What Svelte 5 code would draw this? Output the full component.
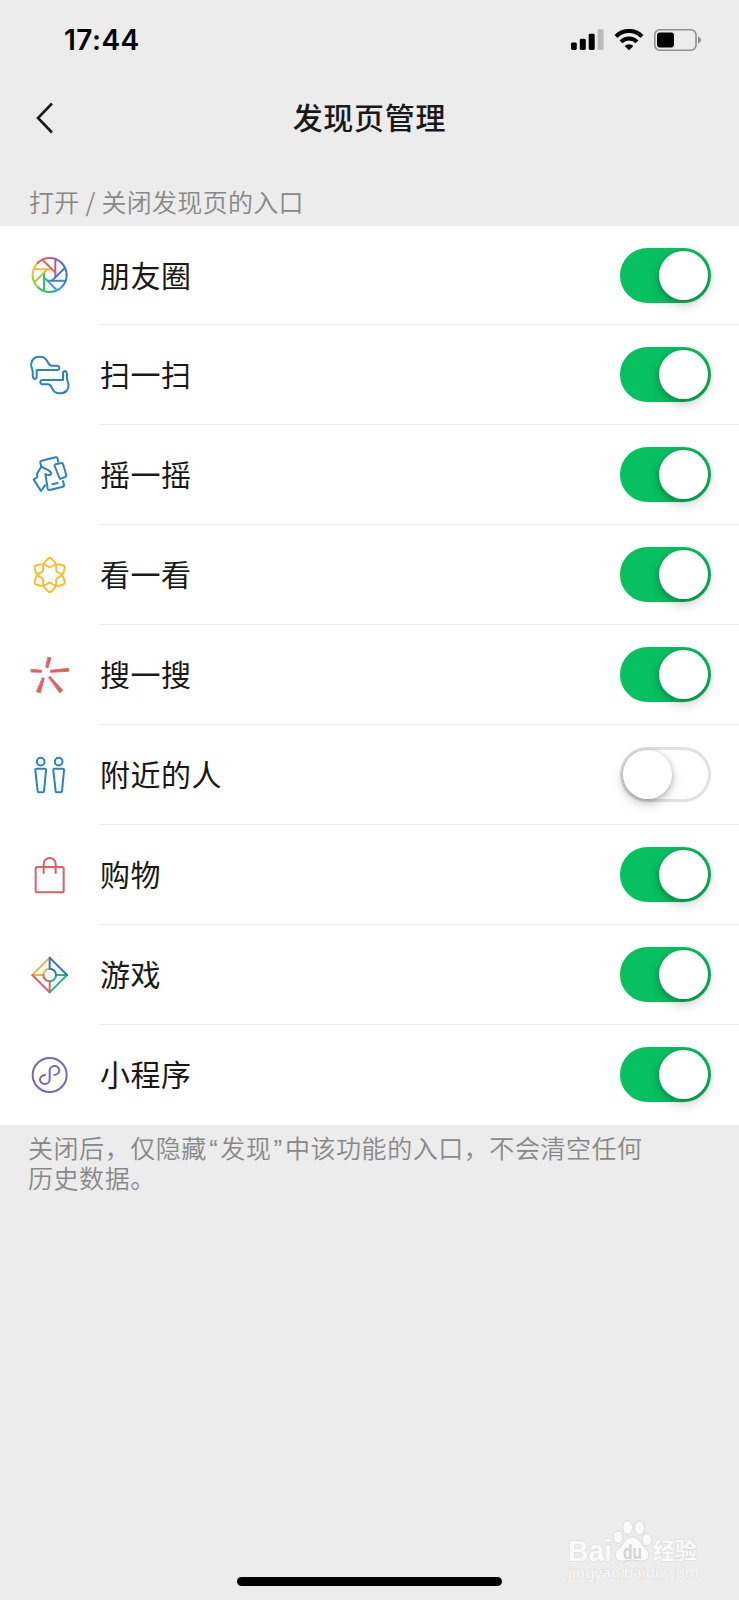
<script>
  // Entries of the Discover page
  let entries = $state([
    { id: 'moments', label: '朋友圈', on: true },
    { id: 'scan', label: '扫一扫', on: true },
    { id: 'shake', label: '摇一摇', on: true },
    { id: 'look', label: '看一看', on: true },
    { id: 'search', label: '搜一搜', on: true },
    { id: 'nearby', label: '附近的人', on: false },
    { id: 'shopping', label: '购物', on: true },
    { id: 'games', label: '游戏', on: true },
    { id: 'mini', label: '小程序', on: true }
  ]);

  // Shutter blades, clockwise from the top
  const blades = ['#9a62b5', '#4a72c4', '#2f86cf', '#35a9bd', '#35bd68', '#a4ce3c', '#f5bd35', '#ea5b5c'];

  function toggle(entry) {
    entry.on = !entry.on;
  }
</script>

<div class="screen">
  <div class="status-bar">
    <span class="time">17:44</span>
    <div class="status-icons">
      <svg width="33" height="22" viewBox="0 0 33 22">
        <rect x="0" y="13.5" width="5.8" height="7.5" rx="1.4" />
        <rect x="8.8" y="9.7" width="6" height="11.3" rx="1.4" />
        <rect x="17.7" y="4.8" width="6" height="16.2" rx="1.4" />
        <rect x="26.6" y="0.2" width="6" height="20.8" rx="1.4" fill="#bcbcbc" />
      </svg>
      <svg class="wifi" width="30" height="22" viewBox="0 0 30 22">
        <path d="M2 7.4A18.4 18.4 0 0 1 28 7.4" fill="none" stroke="#000" stroke-width="4.2" />
        <path d="M7 12.8A11.3 11.3 0 0 1 23 12.8" fill="none" stroke="#000" stroke-width="4" />
        <path d="M15 21.2L10.6 17A6.3 6.3 0 0 1 19.4 17Z" />
      </svg>
      <svg class="battery" width="48" height="22" viewBox="0 0 48 22">
        <rect x="0.8" y="0.8" width="41.2" height="20.4" rx="5" fill="none" stroke="#8e8e8e" stroke-width="1.6" />
        <rect x="3" y="3.4" width="17" height="15" rx="2.8" />
        <path d="M44 7.2Q47 8.6 47 11T44 14.8Z" fill="#8e8e8e" />
      </svg>
    </div>
  </div>

  <div class="nav">
    <button class="back" aria-label="返回">
      <svg width="18" height="32" viewBox="0 0 18 32">
        <path d="M16 1.5L2 16L16 30.5" fill="none" stroke="#191919" stroke-width="2.6" />
      </svg>
    </button>
    <h1>发现页管理</h1>
  </div>

  <p class="caption">打开 / 关闭发现页的入口</p>

  <div class="list">
    {#each entries as entry (entry.id)}
      <div class="row">
        <svg class="icon" viewBox="0 0 120 120">
          {#if entry.id === 'moments'}
            {#each blades as color, i}
              <path transform="rotate({i * 45} 59 60)" stroke={color} d="M76 12V67M59 9A51 51 0 0 1 95 24" />
            {/each}
          {:else if entry.id === 'scan'}
            {#each [0, 180] as angle}
              <path
                transform="rotate({angle} 59.5 60)"
                stroke="#2b83c2"
                d="M4 34C1 18 12 5 27 5C44 4 49 13 55 24Q58 31 64 32H81Q88 33 88 39Q88 45 81 45H20V64Q20 72 14 72Q9 71 8 61Q10 49 4 34Z"
              />
            {/each}
          {:else if entry.id === 'shake'}
            <g stroke="#2b83c2">
              <path d="M34 35L31 23Q30 18 35 17L77 7Q82 6 83 11L84 20" />
              <path d="M77 28L94 24Q98 23 99 27L109 61Q110 65 106 66L93 71Q89 72 88 68L74 33Q73 29 77 28Z" />
              <path d="M45 91L33 108L11 74L22 66L21 56L34 35L57 47Q66 53 62 59Q56 63 46 57L53 101Q54 106 59 105L99 95Q103 94 102 90L99 78" />
              <path d="M67 88L83 84" />
            </g>
          {:else if entry.id === 'look'}
            {#each [0, 60, 120, 180, 240, 300] as angle}
              <path transform="rotate({angle} 59 60)" stroke="#efc12f" d="M41 29Q42 22 47 18L55 10Q59 7 63 10L71 18Q76 22 77 29Q69 30 65 34Q59 39 53 34Q49 30 41 29Z" />
            {/each}
          {:else if entry.id === 'search'}
            <g fill="#dc5f64" stroke="#dc5f64" class="rays">
              <path d="M54 7L63 9L54 38L48 37Z" />
              <path d="M62 46L116 40V49L62 52Z" />
              <path d="M4 43L35 46V52L4 51Z" />
              <path d="M38 68L43 70L31 113L20 110Z" />
              <path d="M56 67L60 64L98 106L90 113Z" />
            </g>
          {:else if entry.id === 'nearby'}
            {#each [0, 54] as x}
              <g transform="translate({x} 0)" stroke="#2b83c2">
                <circle cx="32" cy="20" r="11.5" />
                <path d="M20 41H44Q49 41 48 46L42 109Q42 112 38 112H27Q23 112 23 109L16 46Q15 41 20 41Z" />
              </g>
            {/each}
          {:else if entry.id === 'shopping'}
            <g stroke="#dc5f64">
              <rect x="17" y="36" width="84" height="76" rx="5" />
              <path d="M41 54V27A18 18 0 0 1 77 27V54" />
            </g>
          {:else if entry.id === 'games'}
            <path stroke="#efb44b" d="M59 8L7 60H40A19 19 0 0 1 59 41" />
            <path stroke="#dc5f64" d="M7 60L59 112V79A19 19 0 0 1 40 60" />
            <path stroke="#26b877" d="M59 112L111 60H78A19 19 0 0 1 59 79" />
            <path stroke="#2b78bd" d="M111 60L59 8V41A19 19 0 0 1 78 60" />
          {:else}
            <g stroke="#7568bd">
              <circle cx="59" cy="60" r="51" />
              <path d="M73 60C82 59 89 53 88 45C86 37 79 33 73 33C65 33 59 39 59 47V73C59 81 53 87 45 87C38 87 31 82 30 75C29 67 36 61 45 60" />
            </g>
          {/if}
        </svg>
        <div class="content">
          <span class="label">{entry.label}</span>
          <button
            class="switch"
            class:on={entry.on}
            role="switch"
            aria-checked={entry.on}
            aria-label={entry.label}
            onclick={() => toggle(entry)}
          >
            <span class="knob"></span>
          </button>
        </div>
      </div>
    {/each}
  </div>

  <p class="note">
    <span class="line">关闭后，仅隐藏<span class="quote">“</span>发现<span class="quote">”</span>中该功能的入口，不会清空任何</span>
    <span class="line">历史数据。</span>
  </p>

  <svg class="watermark" width="140" height="70" viewBox="0 0 140 70">
    <g fill="#fafafa" stroke="#d9d9d9" stroke-width="1">
      <text x="4" y="46" class="brand" textLength="44" lengthAdjust="spacingAndGlyphs">Bai</text>
      <ellipse cx="54" cy="22" rx="4.8" ry="6.2" />
      <ellipse cx="63.5" cy="12.5" rx="5" ry="7" />
      <ellipse cx="75.5" cy="13" rx="5" ry="7" />
      <ellipse cx="83" cy="24.5" rx="4.8" ry="6.2" />
      <path d="M68 22C75 22 77 29 82 34C88 40 84 47 76 46Q68 44 61 46C52 48 48 40 54 34C60 29 61 22 68 22Z" />
      <text x="59" y="43.5" class="du" textLength="19" lengthAdjust="spacingAndGlyphs">du</text>
      <text x="89" y="44" class="cjk" textLength="44" lengthAdjust="spacingAndGlyphs">经验</text>
      <text x="4" y="63" class="url" textLength="131" lengthAdjust="spacingAndGlyphs">jingyan.baidu.com</text>
    </g>
  </svg>

  <div class="home-indicator"></div>
</div>

<style>
  :global(body) {
    margin: 0;
    background: #ececec;
  }

  .screen {
    position: relative;
    display: flex;
    flex-direction: column;
    box-sizing: border-box;
    width: 739px;
    height: 1600px;
    overflow: hidden;
    background: #ececec;
    color: #191919;
    font-family: 'Noto Sans CJK SC', sans-serif;
  }

  .status-bar {
    display: flex;
    justify-content: space-between;
    align-items: center;
    box-sizing: border-box;
    height: 80px;
    padding: 0 37px 0 64px;
  }

  .time {
    color: #000;
    font: 600 28px/34px Inter, sans-serif;
    letter-spacing: 0.5px;
  }

  .status-icons {
    display: flex;
    align-items: center;
  }

  .wifi {
    margin-left: 10px;
  }

  .battery {
    margin-left: 10px;
  }

  .nav {
    display: flex;
    align-items: center;
    justify-content: center;
    position: relative;
    height: 72px;
    padding-bottom: 4px;
  }

  .back {
    position: absolute;
    left: 36px;
    top: 22px;
    padding: 0;
    border: 0;
    background: none;
    line-height: 0;
  }

  h1 {
    margin: 0;
    font-size: 30px;
    font-weight: 500;
    line-height: 44px;
    letter-spacing: 0.75px;
  }

  .caption {
    box-sizing: border-box;
    height: 70px;
    margin: 0;
    padding: 27px 29px 0;
    color: #888;
    font-size: 25px;
    font-weight: 350;
    line-height: 36px;
    letter-spacing: 0.3px;
  }

  .list {
    height: 899px;
    flex: none;
    display: flex;
    flex-direction: column;
    justify-content: flex-end;
    background: #fff;
  }

  .row {
    display: flex;
    height: 100px;
    flex: none;
    padding-left: 30px;
  }

  .row:first-child {
    height: 99px;
  }

  .icon {
    width: 40px;
    height: 40px;
    margin: 30px 30px 0 0;
    fill: none;
    stroke-width: 6;
    stroke-linejoin: round;
    stroke-linecap: round;
  }

  .row:first-child .icon {
    margin-top: 29px;
  }

  .rays {
    stroke-width: 2.5;
  }

  .content {
    flex: 1;
    display: flex;
    align-items: center;
    justify-content: space-between;
    box-sizing: border-box;
    padding-right: 28px;
    border-bottom: 1px solid #ebebeb;
  }

  .row:last-child .content {
    border-bottom-color: transparent;
  }

  .label {
    padding-bottom: 3px;
    font-size: 30px;
    line-height: 44px;
    letter-spacing: 0.5px;
  }

  .switch {
    display: flex;
    align-items: center;
    box-sizing: border-box;
    width: 91px;
    height: 55px;
    padding: 0;
    border: 3px solid #e2e2e2;
    border-radius: 28px;
    background: #fff;
  }

  .switch.on {
    justify-content: flex-end;
    border-color: #07c160;
    background: #07c160;
  }

  .knob {
    width: 49px;
    height: 49px;
    border-radius: 50%;
    background: #fff;
    box-shadow: 0 5px 12px rgba(0, 0, 0, 0.2), 0 1px 5px rgba(0, 0, 0, 0.2);
  }

  .note {
    margin: 0;
    padding: 7px 28px 0;
    color: #888;
    font-size: 25px;
    font-weight: 350;
    letter-spacing: 0.55px;
    white-space: nowrap;
  }

  .line {
    display: block;
    height: 30px;
    line-height: 30px;
  }

  .quote {
    display: inline-block;
    width: 13.5px;
    font-family: 'Liberation Sans', sans-serif;
    line-height: 1;
    text-align: center;
  }

  .watermark {
    position: absolute;
    left: 564px;
    top: 1515px;
  }

  .watermark text {
    paint-order: stroke;
  }

  .brand {
    font: 700 29px 'Liberation Sans', sans-serif;
  }

  .du {
    fill: #d2d2d2;
    stroke: none;
    font: 700 20px 'Liberation Sans', sans-serif;
  }

  .cjk {
    font: 700 23px 'Noto Sans CJK SC', sans-serif;
  }

  .url {
    font: 400 14px 'Noto Sans', sans-serif;
  }

  .home-indicator {
    position: absolute;
    left: 237px;
    top: 1577px;
    width: 265px;
    height: 9px;
    border-radius: 5px;
    background: #000;
  }
</style>
